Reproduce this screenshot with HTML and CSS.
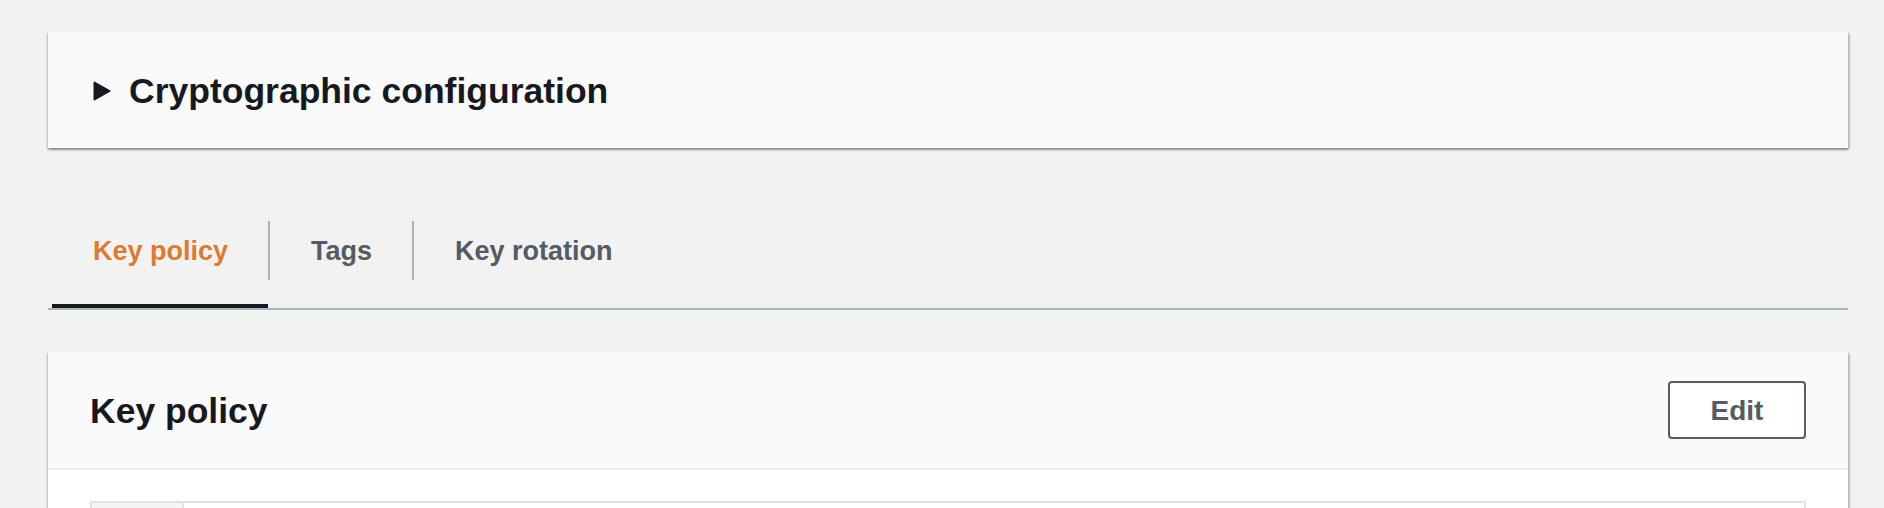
FILE: index.html
```html
<!DOCTYPE html>
<html lang="en">
<head>
<meta charset="utf-8">
<title>Key details</title>
<link rel="stylesheet" href="styles.css">
</head>
<body>
<main class="page">
  <section class="card collapse">
    <svg class="caret" width="18" height="20" viewBox="0 0 18 20" aria-hidden="true"><path d="M1.5 1.5 L16.5 10 L1.5 18.5 Z" fill="#16191f" stroke="#16191f" stroke-width="2" stroke-linejoin="round"/></svg>
    <h2 class="title">Cryptographic configuration</h2>
  </section>

  <nav class="tabs">
    <a class="tab active">Key policy</a>
    <span class="sep"></span>
    <a class="tab">Tags</a>
    <span class="sep"></span>
    <a class="tab">Key rotation</a>
  </nav>

  <section class="card panel">
    <header class="panel-head">
      <h2 class="title">Key policy</h2>
      <button class="btn">Edit</button>
    </header>
    <div class="panel-body">
      <div class="code">
        <div class="gutter"></div>
        <div class="editor"></div>
      </div>
    </div>
  </section>
</main>
</body>
</html>
```

FILE: styles.css
```css
html, body {
  margin: 0;
  padding: 0;
  background: #f2f2f2;
  font-family: "Liberation Sans", Arial, sans-serif;
  color: #16191f;
  overflow: hidden;
}

.page {
  padding: 32px 36px 0 48px;
}

.card {
  background: #fafafa;
  box-shadow: 0 2px 2px 0 rgba(0, 28, 36, 0.35),
              2px 1px 2px 0 rgba(0, 28, 36, 0.18),
              -1px 1px 2px 0 rgba(0, 28, 36, 0.12);
}

.collapse {
  height: 116px;
  display: flex;
  align-items: center;
  padding-left: 45px;
  gap: 18px;
}

.caret {
  display: block;
  flex: none;
  margin-top: 2px;
}

.title {
  margin: 0;
  padding-top: 3px;
  font-size: 35.5px;
  font-weight: 700;
  color: #16191f;
  line-height: 1;
}

.tabs {
  margin-top: 48px;
  display: flex;
  align-items: center;
  padding-left: 4px;
  border-bottom: 2px solid #aab7b8;
}

.tab {
  box-sizing: border-box;
  height: 112px;
  display: flex;
  align-items: center;
  padding: 2px 40px 0 41px;
  font-size: 27px;
  font-weight: 700;
  color: #545b64;
  border-bottom: 4px solid transparent;
}

.tab.active {
  color: #dd7a32;
  border-bottom-color: #16191f;
}

.sep {
  width: 2px;
  height: 59px;
  background: #aab7b8;
  margin-bottom: 4px;
}

.panel {
  margin-top: 42px;
}

.panel-head {
  height: 116px;
  display: flex;
  align-items: center;
  justify-content: space-between;
  padding: 0 42px 0 42px;
  border-bottom: 2px solid #eaeded;
}

.btn {
  width: 138px;
  height: 58px;
  padding: 2px 0 0 0;
  background: #ffffff;
  border: 2px solid #545b64;
  border-radius: 4px;
  font-family: inherit;
  font-size: 28px;
  font-weight: 700;
  color: #545b64;
}

.panel-body {
  background: #ffffff;
  padding: 31px 42px 40px 42px;
}

.code {
  display: flex;
  height: 200px;
  border: 2px solid #e1e4e4;
}

.gutter {
  width: 90px;
  background: #f4f5f5;
  border-right: 2px solid #e1e4e4;
}

.editor {
  flex: 1;
  background: #ffffff;
}
```
